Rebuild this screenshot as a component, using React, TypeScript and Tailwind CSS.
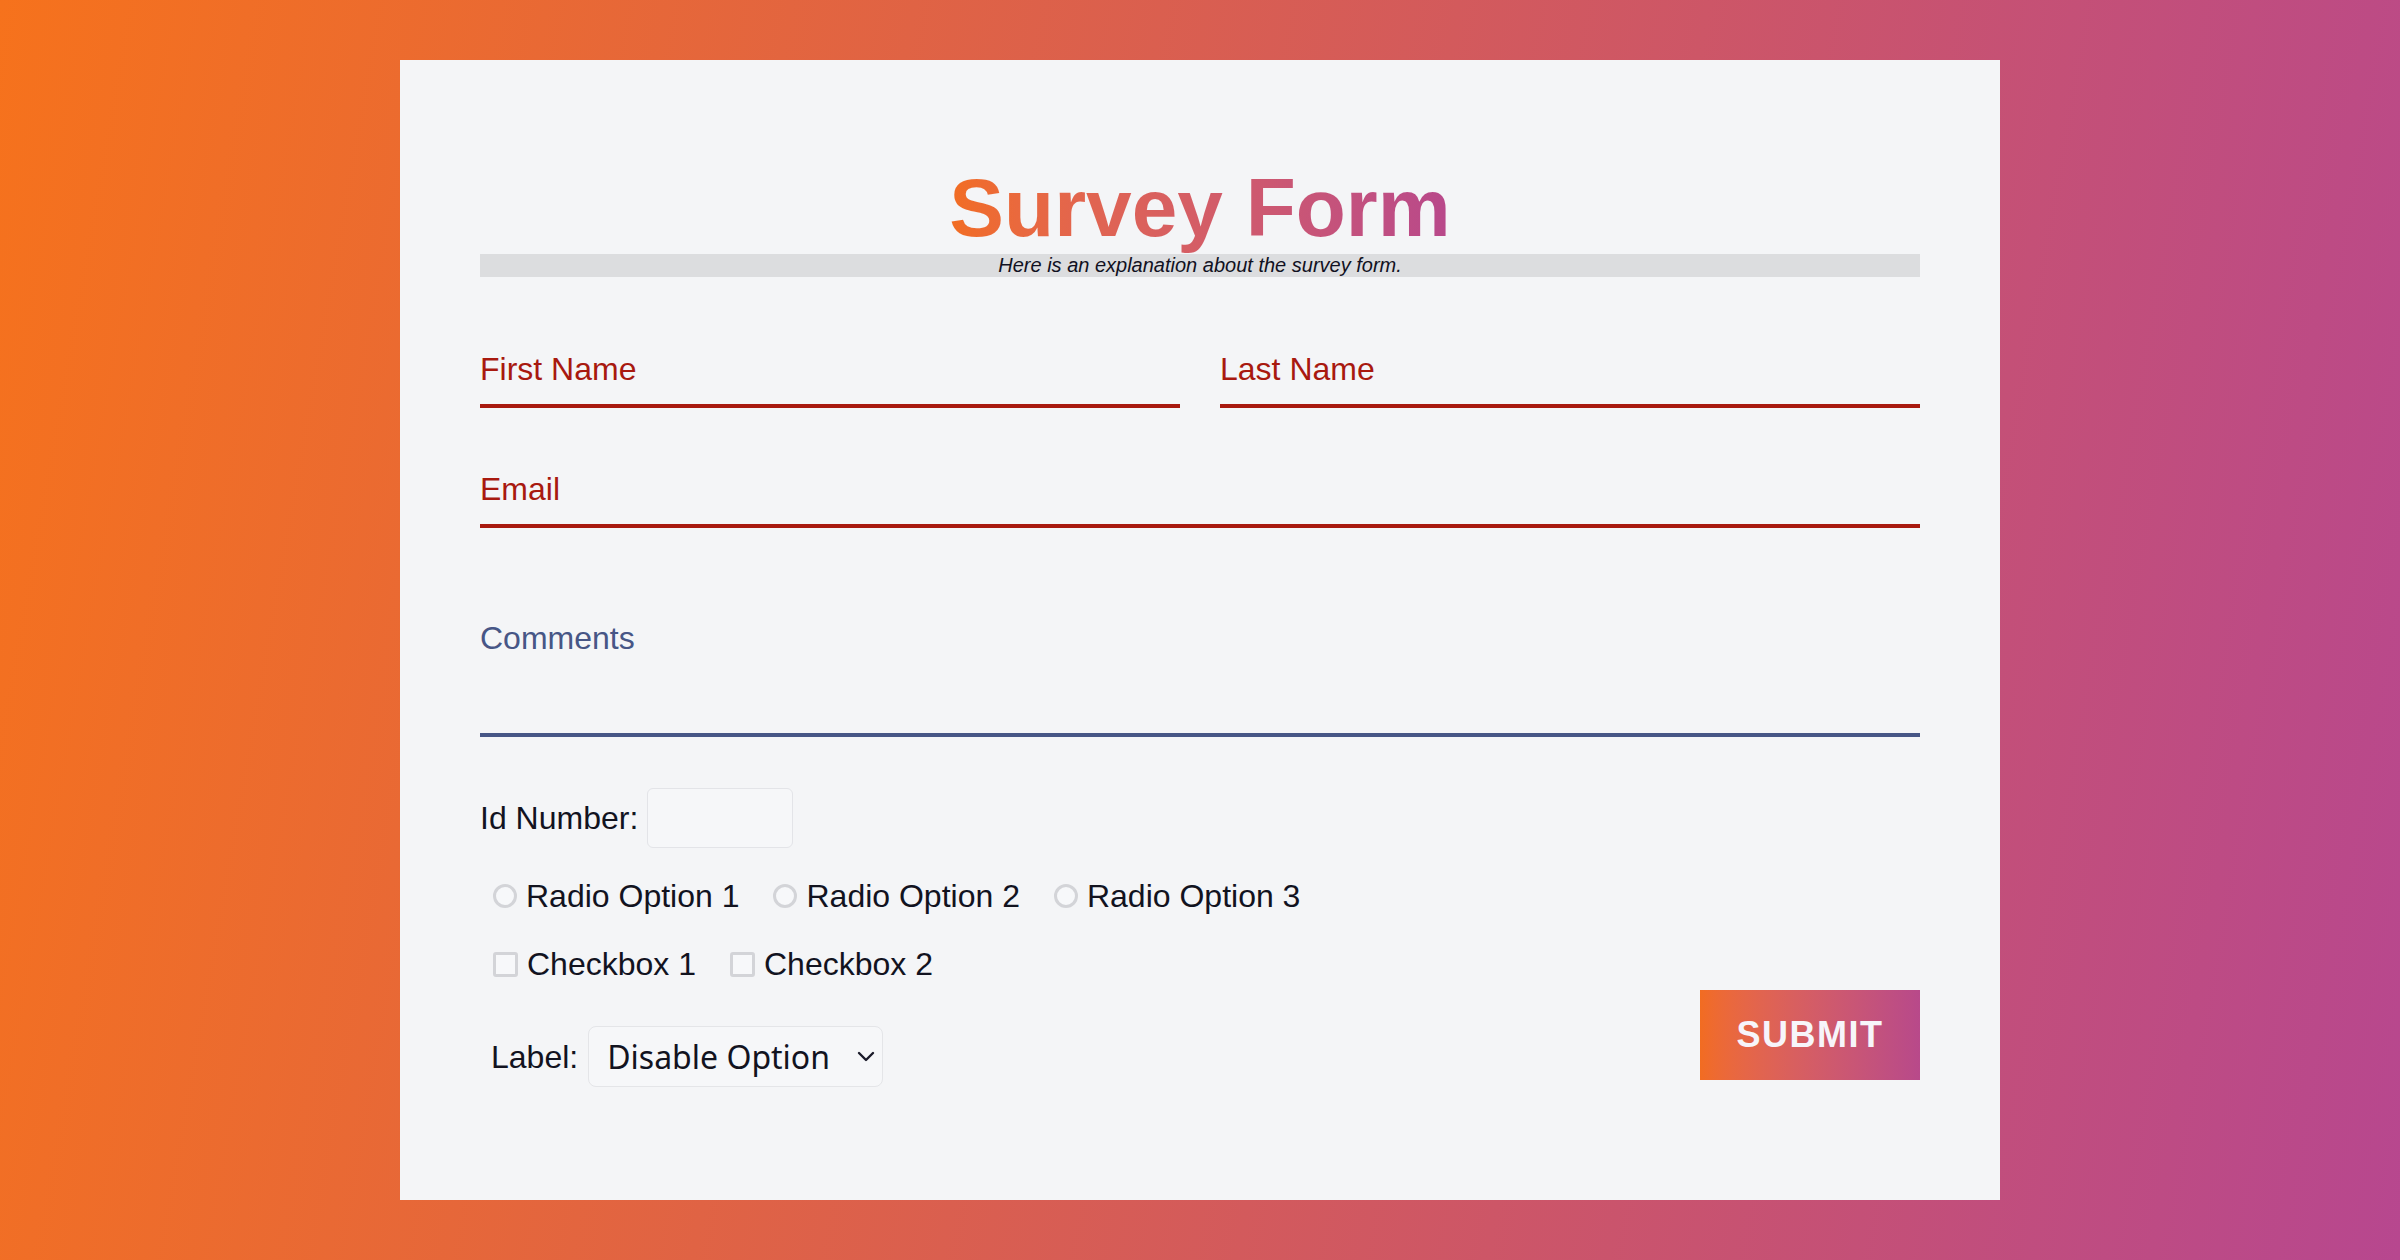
import { useState } from "react";

type ChoiceProps = {
  label: string,
  name?: string,
  kind: "radio" | "checkbox",
}

function Choice({ label, name, kind }: ChoiceProps) {
  return (
    <label className="flex items-center gap-[9px] cursor-pointer">
      <input
        type={kind}
        name={name}
        className={`appearance-none shrink-0 border-[3px] border-[#d3d4d8] bg-[#f7f8fa] ${
          kind === "radio" ? "w-6 h-6 rounded-full" : "w-[25px] h-[25px] rounded-[3px]"
        }`}
      />
      <span className="text-[32px] leading-[36px] text-[#12131f]">{label}</span>
    </label>
  );
}

export default function App() {
  const [option, setOption] = useState("disable");

  return (
    <div className="min-h-screen w-full py-[60px] bg-linear-[100deg] from-[#f6721c] to-[#b7478f] font-['Liberation_Sans',Arial,sans-serif]">
      <form
        onSubmit={(e) => e.preventDefault()}
        className="mx-auto w-[1600px] h-[1140px] bg-[#f4f5f7] px-[80px] pt-[101px] flex flex-col"
      >
        {/* Header */}
        <h1 className="text-center text-[82px] leading-[93px] font-bold">
          <span className="inline-block bg-linear-to-r from-[#f26d21] to-[#b8488b] bg-clip-text text-transparent">
            Survey Form
          </span>
        </h1>
        <p className="bg-[#dcdddf] text-center text-[20px] leading-[23px] italic text-[#111122]">
          Here is an explanation about the survey form.
        </p>

        {/* Names */}
        <div className="mt-[74px] flex gap-[40px]">
          <input
            type="text"
            placeholder="First Name"
            className="flex-1 min-w-0 h-[57px] pb-[17px] text-[32px] leading-[36px] bg-transparent border-b-4 border-[#a8190f] text-[#a8190f] placeholder:text-[#a8190f] outline-none"
          />
          <input
            type="text"
            placeholder="Last Name"
            className="flex-1 min-w-0 h-[57px] pb-[17px] text-[32px] leading-[36px] bg-transparent border-b-4 border-[#a8190f] text-[#a8190f] placeholder:text-[#a8190f] outline-none"
          />
        </div>

        {/* Email */}
        <input
          type="email"
          placeholder="Email"
          className="mt-[63px] w-full h-[57px] pb-[17px] text-[32px] leading-[36px] bg-transparent border-b-4 border-[#a8190f] text-[#a8190f] placeholder:text-[#a8190f] outline-none"
        />

        {/* Comments */}
        <textarea
          placeholder="Comments"
          className="mt-[92px] w-full h-[117px] resize-none text-[32px] leading-[36px] bg-transparent border-b-4 border-[#475686] text-[#475686] placeholder:text-[#475686] outline-none"
        />

        {/* Id number */}
        <div className="mt-[51px] flex items-center gap-[9px]">
          <label htmlFor="idnum" className="text-[32px] leading-[36px] text-[#12131f]">Id Number:</label>
          <input
            id="idnum"
            type="number"
            className="w-[146px] h-[60px] rounded-[6px] border border-[#e3e4e8] bg-[#f6f7f9] outline-none"
          />
        </div>

        {/* Radios */}
        <div className="mt-[30px] pl-[13px] flex items-center gap-[34px]">
          <Choice kind="radio" name="opt" label="Radio Option 1" />
          <Choice kind="radio" name="opt" label="Radio Option 2" />
          <Choice kind="radio" name="opt" label="Radio Option 3" />
        </div>

        {/* Checkboxes */}
        <div className="mt-[32px] pl-[13px] flex items-center gap-[34px]">
          <Choice kind="checkbox" label="Checkbox 1" />
          <Choice kind="checkbox" label="Checkbox 2" />
        </div>

        {/* Select + submit */}
        <div className="mt-[8px] flex items-start justify-between">
          <div className="mt-[36px] pl-[11px] flex items-center gap-[10px]">
            <label htmlFor="sel" className="text-[32px] leading-[36px] text-[#12131f]">Label:</label>
            <div className="relative">
              <select
                id="sel"
                value={option}
                onChange={(e) => setOption(e.target.value)}
                className="appearance-none w-[295px] h-[61px] pl-[18px] rounded-[8px] border border-[#e4e5e8] bg-[#f6f7f9] text-[32px] text-[#12131f] font-['Noto_Sans',sans-serif] outline-none"
              >
                <option value="disable">Disable Option</option>
                <option value="one">Option One</option>
                <option value="two">Option Two</option>
              </select>
              <svg
                className="pointer-events-none absolute right-[8px] top-[25px] w-[18px] h-[11px]"
                viewBox="0 0 18 11"
                fill="none"
                stroke="#1b1b2a"
                strokeWidth="2.4"
                strokeLinecap="round"
                strokeLinejoin="round"
              >
                <path d="M2 2l7 7 7-7" />
              </svg>
            </div>
          </div>
          <button
            type="submit"
            className="w-[220px] h-[90px] bg-linear-to-r from-[#f26c21] to-[#b8498a] text-[36px] font-bold tracking-[1.5px] text-[#f7f5fa] cursor-pointer"
          >
            SUBMIT
          </button>
        </div>
      </form>
    </div>
  );
}
